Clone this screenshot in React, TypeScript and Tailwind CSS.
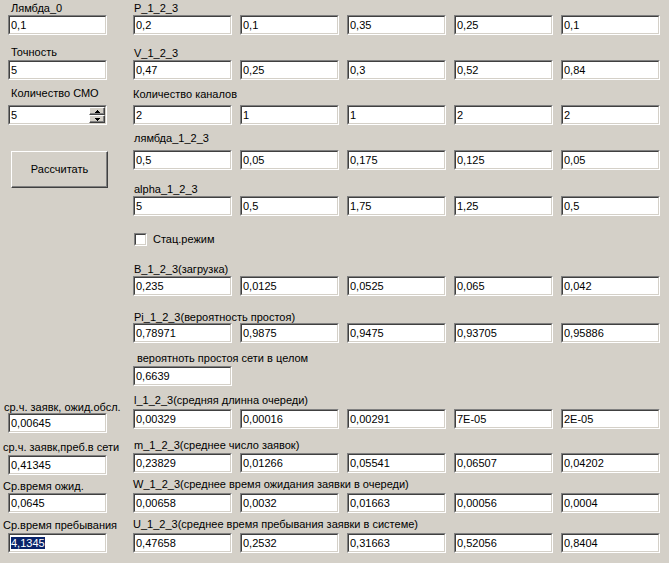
import React from "react";

const font = "font-['Liberation_Sans',Arial,sans-serif]";

function Box({ value, selected, spin }: { value: string; selected?: boolean; spin?: boolean }) {
  return (
    <div className="flex h-[20px] w-[99px] shrink-0 border border-t-[#808080] border-l-[#808080] border-b-white border-r-white bg-white">
      <div className="flex flex-1 border border-t-[#404040] border-l-[#404040] border-b-[#d4d0c8] border-r-[#d4d0c8]">
        <div className="flex-1 pl-[1px] text-[11px] leading-[16px] text-black whitespace-nowrap overflow-hidden">
          {selected ? <span className="bg-[#0a246a] text-white">{value}</span> : value}
        </div>
        {spin && (
          <div className="flex w-[16px] flex-col">
            <SpinBtn up />
            <SpinBtn />
          </div>
        )}
      </div>
    </div>
  );
}

function SpinBtn({ up }: { up?: boolean }) {
  return (
    <div className="flex h-[8px] w-[16px] items-center justify-center border border-t-white border-l-white border-b-[#404040] border-r-[#404040] bg-[#d4d0c8] shadow-[inset_-1px_-1px_0_#808080]">
      <svg width="5" height="3" viewBox="0 0 5 3">
        {up ? <path d="M2 0h1v1h1v1h1v1H0V2h1V1h1z" fill="#000" /> : <path d="M0 0h5v1H4v1H3v1H2V2H1V1H0z" fill="#000" />}
      </svg>
    </div>
  );
}

function Label({ text, className = "" }: { text: string; className?: string }) {
  return (
    <div className={`relative z-10 h-[13px] text-[11px] leading-[13px] text-black whitespace-nowrap ${className}`}>
      {text}
    </div>
  );
}

function Row({ values }: { values: string[] }) {
  return (
    <div className="flex gap-[8px]">
      {values.map((v, i) => (
        <Box key={i} value={v} />
      ))}
    </div>
  );
}

export default function App() {
  return (
    <div className={`flex h-[563px] w-[669px] overflow-hidden bg-[#d4d0c8] ${font}`}>
      {/* left column */}
      <div className="flex w-[133px] shrink-0 flex-col">
        <Label text="Лямбда_0" className="mt-[2px] ml-[11px]" />
        <div className="ml-[8px]"><Box value="0,1" /></div>
        <Label text="Точность" className="mt-[11px] ml-[11px]" />
        <div className="ml-[8px] mt-[1px]"><Box value="5" /></div>
        <Label text="Количество СМО" className="mt-[7px] ml-[11px]" />
        <div className="ml-[8px] mt-[5px]"><Box value="5" spin /></div>
        <button className="ml-[11px] mt-[26px] flex h-[37px] w-[97px] items-center justify-center border border-t-white border-l-white border-b-[#404040] border-r-[#404040] bg-[#d4d0c8] text-[11px] text-black shadow-[inset_-1px_-1px_0_#808080]">
          Рассчитать
        </button>
        <Label text="ср.ч. заявк, ожид.обсл." className="mt-[213px] ml-[4px]" />
        <div className="ml-[8px] -mt-[1px]"><Box value="0,00645" /></div>
        <Label text="ср.ч. заявк,преб.в сети" className="mt-[8px] ml-[3px]" />
        <div className="ml-[8px] mt-[1px]"><Box value="0,41345" /></div>
        <Label text="Ср.время ожид." className="mt-[5px] ml-[3px]" />
        <div className="ml-[8px]"><Box value="0,0645" /></div>
        <Label text="Ср.время пребывания" className="mt-[6px] ml-[3px]" />
        <div className="ml-[8px] mt-[1px]"><Box value="4,1345" selected /></div>
      </div>

      {/* right column */}
      <div className="flex flex-col">
        <Label text="P_1_2_3" className="mt-[2px] ml-[1px]" />
        <Row values={["0,2", "0,1", "0,35", "0,25", "0,1"]} />
        <Label text="V_1_2_3" className="mt-[12px] ml-[1px]" />
        <Row values={["0,47", "0,25", "0,3", "0,52", "0,84"]} />
        <Label text="Количество каналов" className="mt-[8px]" />
        <div className="mt-[4px]"><Row values={["2", "1", "1", "2", "2"]} /></div>
        <Label text="лямбда_1_2_3" className="mt-[7px] ml-[1px]" />
        <div className="mt-[5px]"><Row values={["0,5", "0,05", "0,175", "0,125", "0,05"]} /></div>
        <Label text="alpha_1_2_3" className="mt-[13px] ml-[1px]" />
        <Row values={["5", "0,5", "1,75", "1,25", "0,5"]} />
        <div className="mt-[17px] ml-[1px] flex items-center gap-[6px]">
          <div className="h-[13px] w-[13px] border border-t-[#808080] border-l-[#808080] border-b-white border-r-white">
            <div className="h-full w-full border border-t-[#404040] border-l-[#404040] border-b-[#d4d0c8] border-r-[#d4d0c8] bg-white" />
          </div>
          <span className="text-[11px] leading-[13px] text-black">Стац.режим</span>
        </div>
        <Label text="B_1_2_3(загрузка)" className="mt-[17px] ml-[1px]" />
        <Row values={["0,235", "0,0125", "0,0525", "0,065", "0,042"]} />
        <Label text="Pi_1_2_3(вероятность простоя)" className="mt-[15px] ml-[1px]" />
        <div className="-mt-[1px]"><Row values={["0,78971", "0,9875", "0,9475", "0,93705", "0,95886"]} /></div>
        <Label text="вероятноть простоя сети в целом" className="mt-[9px] ml-[4px]" />
        <div className="mt-[1px]"><Box value="0,6639" /></div>
        <Label text="l_1_2_3(средняя длинна очереди)" className="mt-[8px] ml-[1px]" />
        <div className="mt-[2px]"><Row values={["0,00329", "0,00016", "0,00291", "7E-05", "2E-05"]} /></div>
        <Label text="m_1_2_3(среднее число заявок)" className="mt-[10px] ml-[1px]" />
        <div className="mt-[1px]"><Row values={["0,23829", "0,01266", "0,05541", "0,06507", "0,04202"]} /></div>
        <Label text="W_1_2_3(среднее время ожидания заявки в очереди)" className="mt-[5px]" />
        <div className="mt-[2px]"><Row values={["0,00658", "0,0032", "0,01663", "0,00056", "0,0004"]} /></div>
        <Label text="U_1_2_3(среднее время пребывания заявки в системе)" className="mt-[5px]" />
        <div className="mt-[2px]"><Row values={["0,47658", "0,2532", "0,31663", "0,52056", "0,8404"]} /></div>
      </div>
    </div>
  );
}
